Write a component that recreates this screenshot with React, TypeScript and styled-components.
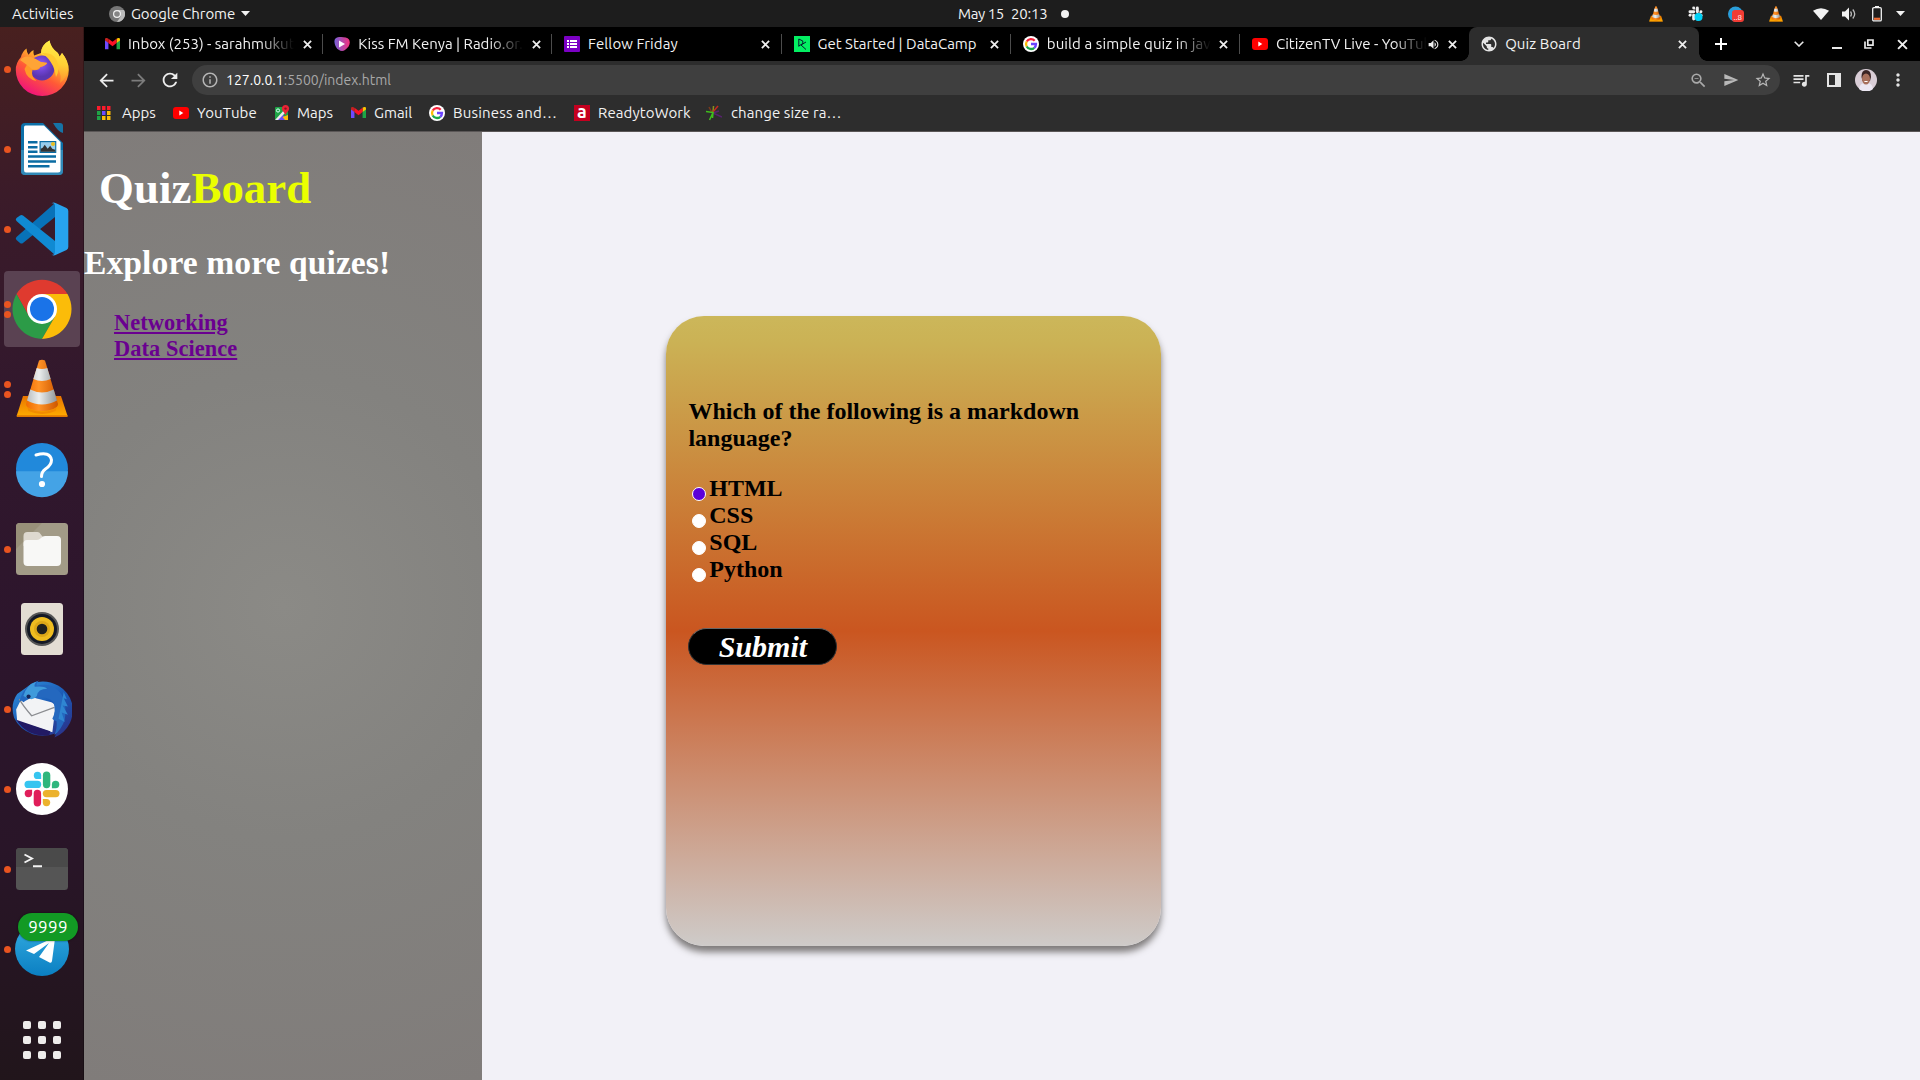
import React from 'react';
import styled, { createGlobalStyle, css } from 'styled-components';
import {
  MdArrowBack, MdArrowForward, MdRefresh, MdInfoOutline, MdZoomOut, MdSend,
  MdStarBorder, MdQueueMusic, MdPublic, MdMoreVert, MdVolumeUp,
} from 'react-icons/md';

const Global = createGlobalStyle`
  * { box-sizing: border-box; }
  body { margin: 0; background: #000; overflow: hidden; }
  svg { display: block; flex: none; }
`;

const Desktop = styled.div`
  width: 1920px;
  height: 1080px;
  display: flex;
  flex-direction: column;
  overflow: hidden;
  color: #f2f2f2;
  font: 15px/20px Ubuntu, "Noto Sans", sans-serif;
`;

const Text = styled.span<{ $ls?: number }>`
  white-space: pre;
  letter-spacing: ${p => p.$ls ?? 0}px;
`;

/* ---------- system bar ---------- */
const SystemBar = styled.header`
  height: 27px;
  flex: none;
  background: #1d1d1d;
  display: grid;
  grid-template-columns: 958px 1fr auto;
  align-items: center;
`;
const BarLeft = styled.div`
  display: flex;
  align-items: center;
  padding-left: 12px;
`;
const Activities = styled(Text)`width: 97px;`;
const AppMenu = styled.div`
  display: flex;
  align-items: center;
  gap: 6px;
`;
const Clock = styled.div`
  display: flex;
  align-items: center;
`;
const Day = styled(Text)`width: 53px;`;
const Dot = styled.i`
  width: 8px;
  height: 8px;
  border-radius: 50%;
  background: #f2f2f2;
  margin-left: 13px;
`;
const Tray = styled.div`
  display: flex;
  align-items: center;
  padding-right: 11px;
`;
const TrayCell = styled.div<{ $w: number; $gap?: number }>`
  width: ${p => p.$w}px;
  margin-left: ${p => p.$gap ?? 0}px;
  display: flex;
  justify-content: center;
`;

/* ---------- dock ---------- */
const Workspace = styled.div`
  flex: 1;
  display: flex;
  min-height: 0;
`;
const Dock = styled.nav`
  width: 84px;
  flex: none;
  padding-top: 2px;
  display: flex;
  flex-direction: column;
  background: linear-gradient(180deg, #48201f 0%, #3b1b29 16%, #32182d 35%, #2c152c 60%, #291528 78%, #21151b 100%);
  border-right: 1px solid rgba(0, 0, 0, 0.25);
`;
const DockItem = styled.div<{ $active?: boolean }>`
  height: 76px;
  width: 76px;
  flex: none;
  margin: 2px 4px;
  border-radius: 4px;
  display: grid;
  grid-template-columns: 8px 60px 8px;
  align-items: center;
  background: ${p => (p.$active ? '#5a4252' : 'transparent')};
  position: relative;
`;
const Dots = styled.div`
  display: flex;
  flex-direction: column;
  gap: 3px;
`;
const RunDot = styled.i`
  width: 7px;
  height: 7px;
  border-radius: 50%;
  background: #e95420;
`;
const Badge = styled.span`
  position: absolute;
  left: 14px;
  top: 2px;
  width: 60px;
  height: 28px;
  border-radius: 14px;
  background: #129a24;
  box-shadow: 0 0 2px rgba(0, 0, 0, 0.6);
  color: #fff;
  font-size: 17px;
  line-height: 28px;
  letter-spacing: 0.3px;
  text-align: center;
`;
const AppGrid = styled.div`
  margin: 32px 0 0 23px;
  display: grid;
  grid-template-columns: repeat(3, 8px);
  grid-auto-rows: 8px;
  gap: 7px;
`;
const AppGridDot = styled.i`
  border-radius: 2px;
  background: #eeeceb;
`;

/* ---------- browser ---------- */
const Browser = styled.main`
  flex: 1;
  display: flex;
  flex-direction: column;
  min-width: 0;
  background: #2d2d2d;
`;
const TabStrip = styled.div`
  height: 34px;
  flex: none;
  background: #000;
  display: flex;
  align-items: center;
  padding-left: 10px;
`;
const TabBox = styled.div<{ $active?: boolean; $pad: number }>`
  width: ${p => (p.$active ? 230 : 229.2)}px;
  height: 34px;
  flex: none;
  display: flex;
  align-items: center;
  padding: 0 1px 0 ${p => p.$pad}px;
  position: relative;
  ${p => p.$active && css`
    background: #2d2d2d;
    border-radius: 8px 8px 0 0;
    &::before, &::after {
      content: '';
      position: absolute;
      bottom: 0;
      width: 8px;
      height: 8px;
    }
    &::before { left: -8px; background: radial-gradient(circle at 0 0, transparent 7.5px, #2d2d2d 8px); }
    &::after { right: -8px; background: radial-gradient(circle at 100% 0, transparent 7.5px, #2d2d2d 8px); }
  `}
`;
const TabTitle = styled(Text)<{ $fade?: boolean; $indent?: number }>`
  flex: 1;
  margin-left: ${p => p.$indent ?? 8}px;
  overflow: hidden;
  ${p => p.$fade && css`
    mask-image: linear-gradient(to left, transparent 0, #000 34px);
  `}
`;
const TabClose = styled.div`
  width: 12px;
  margin-left: 7px;
  display: flex;
  justify-content: center;
`;
const TabRule = styled.i<{ $hidden?: boolean }>`
  width: 1px;
  height: 20px;
  margin: 0 -1px 0 9.2px;
  background: ${p => (p.$hidden ? 'transparent' : '#4c4c4c')};
`;
const WindowKeys = styled.div`
  flex: 1;
  display: grid;
  grid-template-columns: 44px 46px 30px 34px 32px;
  justify-items: center;
  align-items: center;
  & > :nth-child(n + 2) { transform: none; }
`;
const NewTab = styled.div`
  width: 44px;
  margin-right: 33px;
  display: flex;
  justify-content: center;
`;
const MinimizeKey = styled.i`
  width: 10px;
  height: 2px;
  margin-top: 8px;
  background: #e8e8e8;
`;
const Toolbar = styled.div`
  height: 38px;
  flex: none;
  display: grid;
  grid-template-columns: 44px 20px 44px 1588px 42px 24px 40px 24px;
  align-items: center;
  justify-items: center;
`;
const OmniBox = styled.div`
  width: 1588px;
  height: 30px;
  border-radius: 15px;
  background: #3f3f3f;
  color: #a8a8a8;
  display: flex;
  align-items: center;
  padding: 0 9px;
  font-size: 14px;
`;
const Url = styled.div`
  flex: 1;
  margin-left: 7px;
  display: flex;
`;
const Host = styled(Text)`color: #fff;`;
const OmniIcons = styled.div`
  display: grid;
  grid-template-columns: repeat(3, 32.3px);
  justify-items: center;
  align-items: center;
  margin-right: -8px;
`;
const Bookmarks = styled.div`
  height: 32px;
  flex: none;
  display: flex;
  padding-left: 13px;
  align-items: center;
  padding-bottom: 5px;
`;
const Bookmark = styled.div<{ $w: number; $gap?: number }>`
  width: ${p => p.$w}px;
  display: flex;
  align-items: center;
  gap: ${p => p.$gap ?? 8}px;
`;

/* ---------- web page ---------- */
const Page = styled.div`
  flex: 1;
  border-top: 1px solid #5b5757;
  display: flex;
  background: #f2f1f7;
  font-family: "Liberation Serif", "Times New Roman", serif;
  min-height: 0;
`;
const Aside = styled.aside`
  width: 398px;
  flex: none;
  padding-top: 31px;
  background: radial-gradient(circle, #8b8a86 0%, #83827f 45%, #807c7a 100%);
  color: #fff;
`;
const Brand = styled.h1`
  margin: 0 0 30px 15px;
  font-size: 44.8px;
  line-height: 51px;
  letter-spacing: 0.08px;
`;
const BrandAccent = styled.span`color: #eaff00;`;
const Explore = styled.h2`
  margin: 0 0 28px;
  font-size: 33.6px;
  line-height: 38px;
  letter-spacing: 0.08px;
`;
const Links = styled.div`
  margin-left: 30px;
  display: flex;
  flex-direction: column;
  align-items: flex-start;
`;
const QuizLink = styled.a`
  color: #6a0090;
  font-size: 22.4px;
  font-weight: bold;
  line-height: 26px;
  letter-spacing: 0.06px;
  text-decoration: underline;
`;
const QuizCard = styled.section`
  margin: 184px 0 0 184px;
  width: 495px;
  height: 630px;
  padding: 82px 23px 0 22.4px;
  border-radius: 38px;
  background: linear-gradient(#ccb75a 0%, #cbb255 4%, #ca5620 50%, #cecbc9 100%);
  box-shadow: 0 6px 7px 0 #7d7a7a;
  color: #000;
`;
const Question = styled.h3`
  margin: 0 0 23px;
  font-size: 24px;
  line-height: 27px;
`;
const Option = styled.label`
  display: flex;
  font-size: 24px;
  font-weight: bold;
  line-height: 27px;
`;
const Radio = styled.i<{ $on?: boolean }>`
  width: 14px;
  height: 14px;
  margin: 12px 3.3px 0 3.6px;
  border-radius: 50%;
  border: 1px solid #fff;
  background: ${p => (p.$on ? '#5b00d8' : '#fff')};
`;
const Submit = styled.button`
  display: block;
  margin-top: 45px;
  width: 149px;
  height: 37px;
  padding: 0;
  border: 1px solid #333;
  border-top-color: #666;
  border-radius: 19px;
  background: #000;
  color: #fff;
  font: italic bold 30px/34px "Liberation Serif", "Times New Roman", serif;
`;

/* ---------- drawings ---------- */
const Caret = () => <svg width="9" height="5" viewBox="0 0 9 5"><path d="M0 0h9L4.5 5z" fill="#f2f2f2" /></svg>;
const Cross = ({ s = 9, w = 2 }: { s?: number; w?: number }) => (
  <svg width={s} height={s} viewBox="0 0 10 10"><path d="M1 1l8 8M9 1l-8 8" stroke="#eee" strokeWidth={w} /></svg>
);
const GrayChrome = () => (
  <svg width="16" height="16" viewBox="0 0 16 16">
    <circle cx="8" cy="8" r="8" fill="#777" />
    <path d="M8 4h7a8 8 0 0 1-7 12l4-6z" fill="#bbb" />
    <circle cx="8" cy="8" r="4" fill="#f2f2f2" /><circle cx="8" cy="8" r="2.8" fill="#858585" />
  </svg>
);
const Cone = ({ s }: { s: number }) => (
  <svg width={s} height={s} viewBox="0 0 60 60">
    <defs>
      <linearGradient id="coneO" x1="0" x2="1"><stop stopColor="#ef6c00" /><stop offset=".4" stopColor="#ff9226" /><stop offset="1" stopColor="#cc5600" /></linearGradient>
      <linearGradient id="coneW" x1="0" x2="1"><stop stopColor="#b9bec0" /><stop offset=".4" stopColor="#eceeee" /><stop offset="1" stopColor="#8f9699" /></linearGradient>
      <linearGradient id="coneB" x1="0" x2="0" y1="0" y2="1"><stop stopColor="#e87400" /><stop offset="1" stopColor="#ffae00" /></linearGradient>
    </defs>
    <path d="M11 37h38l6.400 19.500q.2 1.500-1.200 1.500H6q-1.400 0-1.200-1.500z" fill="url(#coneB)" />
    <path d="M4.800 56.300h50.600v1.800H4.800z" fill="#e07900" />
    <path d="M14.500 46a15.600 7.500 0 0 0 31 0l-2 6q-13 6-27 0z" fill="#f28b00" />
    <path d="M27 1.500q3-1.600 6 0L46 45a16 7 0 0 1-32 0z" fill="url(#coneO)" />
    <path d="M24.700 9q5.300 2.200 10.600 0l3.400 11q-8.700 4-17.400 0zM18.300 30.500q11.700 6 23.400 0L45 41.500q-15 8-30 0z" fill="url(#coneW)" />
  </svg>
);
const SlackMark = ({ s, mono }: { s: number; mono?: boolean }) => {
  const c = mono ? ['#eee', '#eee', '#eee', '#eee'] : ['#36c5f0', '#2eb67d', '#ecb22e', '#e01e5a'];
  return (
    <svg width={s} height={s} viewBox="0 0 60 60">
      {!mono && <circle cx="30" cy="30" r="26" fill="#fff" />}
      <g transform={mono ? 'translate(30 30) scale(1.6) translate(-30 -30)' : undefined}>
        {[0, 1, 2, 3].map(i => (
          <g key={i} transform={`rotate(${i * 90} 30 30)`} fill={c[i]}>
            <rect x="12.500" y="21.700" width="16.700" height="7.400" rx="3.700" />
            <path d="M29.200 20.100h-3.700a3.700 3.700 0 1 1 3.700-3.700z" />
          </g>
        ))}
      </g>
    </svg>
  );
};
const TraySlack = () => (
  <svg width="16" height="16" viewBox="0 0 16 16"><SlackMark s={15} mono /><circle cx="10.500" cy="11" r="4" fill="#00d0f5" /></svg>
);
const TrayTelegram = () => (
  <svg width="16" height="16" viewBox="0 0 16 16">
    <circle cx="7.500" cy="8" r="7.500" fill="#2b9fdb" />
    <rect x="4" y="4" width="12" height="12" rx="3" fill="#f23c34" />
    <text x="5.500" y="13.500" fontSize="8" fill="#fff" fontFamily="Ubuntu, Noto Sans">..8</text>
  </svg>
);
const Wifi = () => <svg width="16" height="12" viewBox="0 0 16 12"><path d="M0 2.800Q8-2.500 16 2.800L8 12z" fill="#f2f2f2" /></svg>;
const Speaker = () => (
  <svg width="16" height="14" viewBox="0 0 16 14">
    <path d="M1 4.500h3l4-4v13l-4-4H1z" fill="#f2f2f2" />
    <path d="M9.500 4.500q1.800 2.500 0 5M11.800 2.500q3.800 4.500 0 9" stroke="#bbb" strokeWidth="1.300" fill="none" />
  </svg>
);
const Battery = () => (
  <svg width="12" height="16" viewBox="0 0 12 16">
    <rect x="1.700" y="1.700" width="8.600" height="13.200" rx="1.200" fill="none" stroke="#f2f2f2" strokeWidth="1.300" />
    <path d="M4 0h4v2H4z" fill="#f2f2f2" /><path d="M3 11.700h6v2.200H3z" fill="#ef6c35" />
  </svg>
);

const GmailMark = ({ w = 15 }: { w?: number }) => (
  <svg width={w} height={w * 0.76} viewBox="0 0 24 18">
    <path d="M0 2.500V18h5.500V6z" fill="#6d4aff" /><path d="M18.500 6v12H24V2.500z" fill="#1ea446" />
    <path d="M18.500 1v7L24 4V2.200C24-.2 21-.9 18.500 1z" fill="#fbc400" />
    <path d="M5.500 1C3-.9 0-.2 0 2.200V4l5.500 4z" fill="#c5221f" />
    <path d="M5.500 1v7l6.500 5 6.500-5V1L12 6z" fill="#fa1226" />
  </svg>
);
const RadioMark = () => (
  <svg width="16" height="14" viewBox="0 0 16 14">
    <defs><linearGradient id="rad" x1="0" x2="1"><stop stopColor="#7661d8" /><stop offset="1" stopColor="#f4307c" /></linearGradient></defs>
    <path d="M3 .5C7-.4 13 0 15 2.500 17 6 15 10 11 13 8 15 4 13.500 2 10 .5 7-1 2 3 .5z" fill="url(#rad)" />
    <path d="M5 3.500L11 7l-6 3.500z" fill="#fff" />
  </svg>
);
const FormMark = () => (
  <svg width="16" height="16" viewBox="0 0 16 16">
    <rect width="16" height="16" rx="1" fill="#7b00c4" />
    <path d="M3 4h2v2H3zm3 0h7v2H6zM3 7h2v2H3zm3 0h7v2H6zm-3 3h2v2H3zm3 0h7v2H6z" fill="#fff" />
  </svg>
);
const CampMark = () => (
  <svg width="16" height="16" viewBox="0 0 16 16">
    <rect width="16" height="16" fill="#03ef62" />
    <path d="M4.800 10.500V3l4 2v2.500L4.800 10M12 6L7 9l5 4.500" fill="none" stroke="#05192d" strokeWidth="1" />
  </svg>
);
const GoogleMark = () => (
  <svg width="16" height="16" viewBox="0 0 16 16">
    <circle cx="8" cy="8" r="8" fill="#fff" />
    <g fill="none" strokeWidth="2.300">
      <path d="M11.700 4.700A5 5 0 0 0 3.700 5.500" stroke="#f5213a" /><path d="M3.700 5.500a5 5 0 0 0 0 5" stroke="#fbbc05" />
      <path d="M3.700 10.500a5 5 0 0 0 7.600 1.300" stroke="#19a84a" /><path d="M11.300 11.800A5 5 0 0 0 13 8H8" stroke="#6a44ff" />
    </g>
  </svg>
);
const TubeMark = () => (
  <svg width="16" height="12" viewBox="0 0 16 12"><rect width="16" height="12" rx="3" fill="#f00" /><path d="M6.300 3.600L10.300 6l-4 2.400z" fill="#fff" /></svg>
);
const AppsMark = () => (
  <svg width="14" height="14" viewBox="0 0 14 14">
    {['#fb1c2c', '#fb1c2c', '#fb1c2c', '#1ea446', '#6d4aff', '#fbbc05', '#1ea446', '#fbbc05', '#fbbc05'].map((c, i) => (
      <rect key={i} x={(i % 3) * 5} y={Math.floor(i / 3) * 5} width="3.500" height="4" fill={c} />
    ))}
  </svg>
);
const MapsMark = () => (
  <svg width="16" height="16" viewBox="0 0 16 16">
    <rect x="1" y="2" width="13" height="13" rx="1" fill="#1ea446" /><path d="M3 15l5-6 6 6z" fill="#6d4aff" />
    <path d="M1 15L12 3l2 2L4 15z" fill="#e9e9e9" /><path d="M14 10v5h-3L8.500 12z" fill="#fbbc05" />
    <circle cx="4" cy="5.500" r="1.600" fill="none" stroke="#dff" strokeWidth="1" />
    <path d="M11.500 0a3.600 3.600 0 0 1 3.600 3.800c0 2.200-2.600 3.600-3.600 6.400-1-2.800-3.600-4.200-3.600-6.400A3.600 3.600 0 0 1 11.500 0z" fill="#ea2435" /><circle cx="11.500" cy="3.600" r="1.200" fill="#8a1220" />
  </svg>
);
const ReadyIcon = styled.span`
  width: 16px;
  height: 16px;
  background: #c4001f;
  color: #fff;
  font: bold 18px/13px Ubuntu, "Noto Sans", sans-serif;
  text-align: center;
`;
const StarMark = () => (
  <svg width="16" height="16" viewBox="0 0 16 16" strokeWidth="1.500" fill="none">
    <path d="M6 7.500L3 2" stroke="#7b3a1c" /><path d="M7 7L7.500 1" stroke="#8a8d1b" /><path d="M7 7L12 1" stroke="#c4281f" />
    <path d="M7 8l9 4M7 8l6-2" stroke="#57226e" /><path d="M0 6.500l7 1L3.500 15M7 7.500L6.500 13" stroke="#3fbf1c" />
  </svg>
);

const Firefox = () => (
  <svg width="60" height="60" viewBox="0 0 60 60">
    <defs>
      <linearGradient id="ffA" x1=".8" y1=".1" x2=".3" y2="1"><stop stopColor="#fff44f" /><stop offset=".3" stopColor="#ffb52b" /><stop offset=".6" stopColor="#ff5a36" /><stop offset="1" stopColor="#f0107e" /></linearGradient>
      <linearGradient id="ffB" x1=".6" y1="0" x2=".5" y2="1"><stop stopColor="#fff04a" /><stop offset=".55" stopColor="#ffcf35" /><stop offset="1" stopColor="#ff8a2d" /></linearGradient>
      <radialGradient id="ffC" cx=".45" cy=".35"><stop stopColor="#9a5cf5" /><stop offset=".6" stopColor="#6d42d0" /><stop offset="1" stopColor="#5b36b0" /></radialGradient>
    </defs>
    <path d="M9 18q1-5 5.500-8.500.2 4 2 6.200Q19 12 21.500 11q-.3 3 .6 5.500L29 14Q29 6 37.500 1.500 39 9 45.500 13.500 47 15 47.500 17.500L50 14q6.800 8 6.800 17A26.500 26 0 0 1 3.800 31Q3.600 24 9 18z" fill="url(#ffA)" />
    <path d="M29 15q0-9 8.500-13.500 1 8 8 12.500 2 3.500 2.500 5l2-5q6 8 6 16-1 9-8 14 2-8-2-14-6-11-17-15z" fill="url(#ffB)" />
    <circle cx="30" cy="29" r="12.500" fill="url(#ffC)" />
    <path d="M17 22q5-2 10 1 5 .5 8 .8.400 2-6.500 4.300-2 4-8 3-2 6 4 11-10-2-12-12z" fill="#ff9a27" />
    <path d="M8 21q4-5 11-3 6 2 10 5l6 1q-1 2.500-7 4-2 3-8 2-6-5-12-9z" fill="#ffa436" />
    <path d="M30 14q10-1 14 6 5 9 0 18-1-7-3-11-4-8-11-13z" fill="#ffc930" />
  </svg>
);
const Writer = () => (
  <svg width="60" height="60" viewBox="0 0 60 60">
    <path d="M13 4h18l20 20v28q0 4-4 4H13q-4 0-4-4V8q0-4 4-4z" fill="#0c70a8" />
    <path d="M9 31h42v21q0 4-4 4H13q-4 0-4-4z" fill="#3189b7" />
    <path d="M13.500 6.500H32L48.500 23v28q0 2.500-2.500 2.500H14Q12 53.500 12 51V8.500q0-2 1.500-2z" fill="#fff" />
    <path d="M41 4h7q3 0 3 3v7q-5-1-10-10z" fill="#1673a6" />
    <path d="M16 22h9.500v2.500H16zm0 5h9.500v2.500H16zm0 4.500h9.500V34H16zm0 4.800h28v2.500H16zm0 4.900h28v2.500H16zm0 4.800h21.500v2.500H16z" fill="#0b6ca3" />
    <path d="M27.500 22h16.800v12H27.500z" fill="#0b6ca3" /><path d="M28.700 23.200h14.500v9.600H28.700z" fill="#98cdec" />
    <circle cx="41" cy="25" r="2" fill="#eabd20" />
    <path d="M28.700 32.800v-3l2-1 2-3 3 4 2.500-3 2 3 3 1v2z" fill="#333" />
  </svg>
);
const Code = () => (
  <svg width="60" height="60" viewBox="0 0 60 60">
    <path d="M43 4L4.500 38q-1.500 1.500 0 3l3.500 3q1.500 1 3 0L43 18z" fill="#0872b8" />
    <path d="M43 56L4.500 22q-1.500-1.500 0-3L8 16.500q1.500-1 3 0L43 42z" fill="#108ad2" />
    <path d="M39.500 4.500q2-1.500 4-.5l11 5q1.800 1 1.800 3v36q0 2-1.800 3l-11 5q-2 1-4-.5 3.500 1 3.500-2.500V7q0-3.500-3.500-2.500z" fill="#27a3ee" />
  </svg>
);
const Chrome = () => (
  <svg width="60" height="60" viewBox="0 0 60 60">
    <path d="M30 15H4.500a30 30 0 0 1 51 0z" fill="#df3a2f" />
    <path d="M30 15H4.500L17 37.500 30 30z" fill="#df3a2f" />
    <path d="M4.500 15L17 37.500 30 30l13 7.500L30 60A30 30 0 0 1 4.500 15z" fill="#2c9b47" />
    <path d="M30 15h25.500A30 30 0 0 1 30 60l13-22.500z" fill="#fbbc09" />
    <circle cx="30" cy="30" r="15" fill="#fff" /><circle cx="30" cy="30" r="12" fill="#1a73e8" />
  </svg>
);
const Help = () => (
  <svg width="60" height="60" viewBox="0 0 60 60">
    <circle cx="30" cy="30" r="26" fill="#2189db" /><path d="M4 32.300h52a26 26 0 0 1-52 0z" fill="#44a3e6" />
    <path d="M24 16q14-4 15.500 5 0 5-6 9-4 3-4 7.500" fill="none" stroke="#fff" strokeWidth="3" strokeLinecap="round" />
    <circle cx="30" cy="45" r="3.100" fill="#fff" />
  </svg>
);
const Files = () => (
  <svg width="60" height="60" viewBox="0 0 60 60">
    <rect x="4" y="4" width="52" height="52" rx="3.500" fill="#a29b87" /><path d="M4 30L30 4H8Q4 4 4 8z" fill="#989079" />
    <path d="M11.500 17q0-4 4-4h10q2 0 3 2l3 4v8H11.500z" fill="#ded9cf" />
    <path d="M15 21h10q2 0 4-2 1.500-2 4-2h12q4 0 4 4v22q0 4-4 4H15.500q-4 0-4-4V24.500q0-3.500 3.500-3.500z" fill="#f8f8f6" />
  </svg>
);
const Rhythm = () => (
  <svg width="60" height="60" viewBox="0 0 60 60">
    <rect x="9" y="4" width="42" height="52" rx="3.500" fill="#e3ddd3" />
    <circle cx="30" cy="30" r="17" fill="#555" /><circle cx="30" cy="30" r="15" fill="#151a26" />
    <circle cx="30" cy="30" r="12" fill="#efbd20" /><circle cx="30" cy="30" r="8" fill="#c9920f" opacity=".5" />
    <circle cx="30" cy="30" r="5.300" fill="#20211e" />
  </svg>
);
const Thunderbird = () => (
  <svg width="60" height="60" viewBox="1 0 58 57">
    <defs><linearGradient id="tb" x1=".1" y1="0" x2=".9" y2="1"><stop stopColor="#2f8fdb" /><stop offset=".5" stopColor="#1b59b5" /><stop offset="1" stopColor="#2c2f86" /></linearGradient></defs>
    <path d="M20 4q13-5 26 2 10 6 13 17 2 10-2 19-5 10-15 14l2-4q-12 4-23 1Q8 48 3 37-1 24 6 14z" fill="url(#tb)" />
    <path d="M5 29L11 17q1-3 5-1l23 6q3 1 4 5l-3 24L6 40z" fill="#f2f3f5" />
    <path d="M8 19q4 7 12 16l22-8" fill="none" stroke="#8a8c90" strokeWidth="1.200" />
    <path d="M5 39l33 11-1 4Q16 56 5 39z" fill="#221a64" />
    <path d="M10 16Q14 5 27 1q-3 3-2 5 12-3 20 4 10 9 7 29-3 9-10 15 3-8 2-14-3 0-4-2 4-8 1-16-6-6-15-4-8-1-14 4-2-3-4 0z" fill="#2468bf" />
    <path d="M12 16Q15 5 25 2q-3 3-2 5 9-1 12 2-9 0-10 7-4 6-13 0z" fill="#3f9bdb" />
    <circle cx="17" cy="16.500" r="2" fill="#14255a" />
    <path d="M51 12l3 7-3-1 4 8-5-1 5 9-6-2 3 9-6-3" fill="#2f86d2" />
  </svg>
);
const Terminal = () => (
  <svg width="60" height="60" viewBox="0 0 60 60">
    <rect x="4" y="9" width="52" height="42" rx="3.500" fill="#555" /><path d="M4 28V12.500Q4 9 7.500 9h45q3.500 0 3.500 3.500V28z" fill="#4a4a4a" />
    <path d="M12.500 15.500l7.500 4-7.500 4M21 27.200h9" fill="none" stroke="#f4f4f4" strokeWidth="1.900" />
  </svg>
);
const Telegram = () => (
  <svg width="60" height="60" viewBox="0 0 60 60">
    <defs><linearGradient id="tg" x1="0" y1="0" x2="0" y2="1"><stop stopColor="#35aee2" /><stop offset="1" stopColor="#0b7fc2" /></linearGradient></defs>
    <circle cx="30" cy="30" r="27" fill="url(#tg)" />
    <path d="M14 31.500L41 19q2-1 1.800 2L40 42q-.4 2.500-2.500 1.500L27 38l10-14-15 11z" fill="#fff" />
  </svg>
);
const Avatar = () => (
  <svg width="22" height="22" viewBox="0 0 22 22">
    <circle cx="11" cy="11" r="11" fill="#d9cdd6" />
    <path d="M4 20q1-7 7-6 6-1 7 6a11 11 0 0 1-14 0z" fill="#ece7f2" />
    <path d="M6.500 8q0-7 4.500-7 5 0 5 7l-1 4H7.500z" fill="#3a2424" /><ellipse cx="11" cy="10" rx="4" ry="5.500" fill="#a8705c" />
    <path d="M9.400 12.500h3.200" stroke="#fff" />
  </svg>
);

const dock: { icon: React.ReactNode; dots: number; active?: boolean; badge?: string }[] = [
  { icon: <Firefox />, dots: 1 }, { icon: <Writer />, dots: 1 }, { icon: <Code />, dots: 1 },
  { icon: <Chrome />, dots: 2, active: true }, { icon: <Cone s={60} />, dots: 2 }, { icon: <Help />, dots: 0 },
  { icon: <Files />, dots: 1 }, { icon: <Rhythm />, dots: 0 }, { icon: <Thunderbird />, dots: 1 },
  { icon: <SlackMark s={60} />, dots: 1 }, { icon: <Terminal />, dots: 1 }, { icon: <Telegram />, dots: 1, badge: '9999' },
];

const tabs: { icon: React.ReactNode; title: string; pad: number; ls?: number; fade?: boolean; audio?: boolean; active?: boolean; indent?: number }[] = [
  { icon: <GmailMark w={15} />, title: 'Inbox (253) - sarahmukuti', pad: 11, fade: true },
  { icon: <RadioMark />, title: 'Kiss FM Kenya | Radio.or.', pad: 11, fade: true },
  { icon: <FormMark />, title: 'Fellow Friday', pad: 11.6, ls: 0.1 },
  { icon: <CampMark />, title: 'Get Started | DataCamp', pad: 12 },
  { icon: <GoogleMark />, title: 'build a simple quiz in java', pad: 12, ls: 0.1, fade: true },
  { icon: <TubeMark />, title: 'CitizenTV Live - YouTube', pad: 12, fade: true, audio: true },
  { icon: <MdPublic size={18} color="#e4e4e4" />, title: 'Quiz Board', pad: 11, ls: 0.1, active: true, indent: 7 },
];

const bookmarks: { icon: React.ReactNode; label: string; w: number; gap?: number; ls?: number }[] = [
  { icon: <AppsMark />, label: 'Apps', w: 76, gap: 11 },
  { icon: <TubeMark />, label: 'YouTube', w: 101, ls: 0.15 },
  { icon: <MapsMark />, label: 'Maps', w: 77, gap: 7 },
  { icon: <GmailMark />, label: 'Gmail', w: 78 },
  { icon: <GoogleMark />, label: 'Business and…', w: 145, ls: 0.2 },
  { icon: <ReadyIcon>a</ReadyIcon>, label: 'ReadytoWork', w: 132, ls: 0.1 },
  { icon: <StarMark />, label: 'change size ra…', w: 150, gap: 9, ls: 0.1 },
];

const options = ['HTML', 'CSS', 'SQL', 'Python'];

export default function App() {
  return (
    <Desktop>
      <Global />
      <SystemBar>
        <BarLeft>
          <Activities>Activities</Activities>
          <AppMenu><GrayChrome /><Text $ls={-0.08}>Google Chrome</Text><Caret /></AppMenu>
        </BarLeft>
        <Clock><Day $ls={-0.4}>May 15</Day><Text $ls={-0.2}>20:13</Text><Dot /></Clock>
        <Tray>
          <TrayCell $w={40}><Cone s={16} /></TrayCell>
          <TrayCell $w={40}><TraySlack /></TrayCell>
          <TrayCell $w={40}><TrayTelegram /></TrayCell>
          <TrayCell $w={40}><Cone s={16} /></TrayCell>
          <TrayCell $w={28} $gap={11}><Wifi /></TrayCell>
          <TrayCell $w={28}><Speaker /></TrayCell>
          <TrayCell $w={28}><Battery /></TrayCell>
          <TrayCell $w={18}><Caret /></TrayCell>
        </Tray>
      </SystemBar>
      <Workspace>
        <Dock>
          {dock.map((d, i) => (
            <DockItem key={i} $active={d.active}>
              <Dots>{Array.from({ length: d.dots }, (_, k) => <RunDot key={k} />)}</Dots>
              {d.icon}
              {d.badge && <Badge>{d.badge}</Badge>}
            </DockItem>
          ))}
          <AppGrid>{Array.from({ length: 9 }, (_, k) => <AppGridDot key={k} />)}</AppGrid>
        </Dock>
        <Browser>
          <TabStrip>
            {tabs.map((t, i) => (
              <TabBox key={t.title} $active={t.active} $pad={t.pad}>
                {t.icon}
                <TabTitle $ls={t.ls} $fade={t.fade} $indent={t.indent}>{t.title}</TabTitle>
                {t.audio && <MdVolumeUp size={13} color="#eee" />}
                <TabClose><Cross /></TabClose>
                <TabRule $hidden={i >= 5} />
              </TabBox>
            ))}
            <NewTab>
              <svg width="12" height="12" viewBox="0 0 12 12"><path d="M6 0v12M0 6h12" stroke="#fff" strokeWidth="2" /></svg>
            </NewTab>
            <WindowButtons>
              <svg width="10" height="6" viewBox="0 0 10 6"><path d="M.7.7L5 5 9.300.7" stroke="#e8e8e8" strokeWidth="1.600" fill="none" /></svg>
              <MinimizeKey />
              <svg width="10" height="10" viewBox="0 0 10 10"><path d="M3.800 1h5.200v5.200H3.800zM1 2.500V9h6.500" stroke="#e8e8e8" strokeWidth="1.700" fill="none" /></svg>
              <Cross s={11} w={1.8} />
            </WindowButtons>
          </TabStrip>
          <Toolbar>
            <MdArrowBack size={21} color="#eee" />
            <MdArrowForward size={21} color="#7c7c7c" />
            <MdRefresh size={22} color="#eee" />
            <OmniBox>
              <MdInfoOutline size={18} color="#b5b5b5" />
              <Url><Host>127.0.0.1</Host><Text>:5500/index.html</Text></Url>
              <OmniIcons>
                <MdZoomOut size={19} color="#aaa" />
                <MdSend size={16} color="#b8b8b8" />
                <MdStarBorder size={18} color="#b8b8b8" />
              </OmniIcons>
            </OmniBox>
            <MdQueueMusic size={20} color="#e4e4e4" />
            <svg width="14" height="14" viewBox="0 0 14 14"><path fillRule="evenodd" d="M0 0h14v14H0zM2 2v10h6V2z" fill="#e4e4e4" /></svg>
            <Avatar />
            <MdMoreVert size={20} color="#e4e4e4" />
          </Toolbar>
          <Bookmarks>
            {bookmarks.map(b => (
              <Bookmark key={b.label} $w={b.w} $gap={b.gap}>{b.icon}<Text $ls={b.ls}>{b.label}</Text></Bookmark>
            ))}
          </Bookmarks>
          <Page>
            <Aside>
              <Brand>Quiz<BrandAccent>Board</BrandAccent></Brand>
              <Explore>Explore more quizes!</Explore>
              <Links><QuizLink>Networking</QuizLink><QuizLink>Data Science</QuizLink></Links>
            </Aside>
            <QuizCard>
              <Question>Which of the following is a markdown language?</Question>
              {options.map((o, i) => <Option key={o}><Radio $on={i === 0} />{o}</Option>)}
              <Submit>Submit</Submit>
            </QuizCard>
          </Page>
        </Browser>
      </Workspace>
    </Desktop>
  );
}

const WindowButtons = styled.div`
  display: grid;
  grid-template-columns: 46px 30px 34px 32px;
  justify-items: center;
  align-items: center;
`;
